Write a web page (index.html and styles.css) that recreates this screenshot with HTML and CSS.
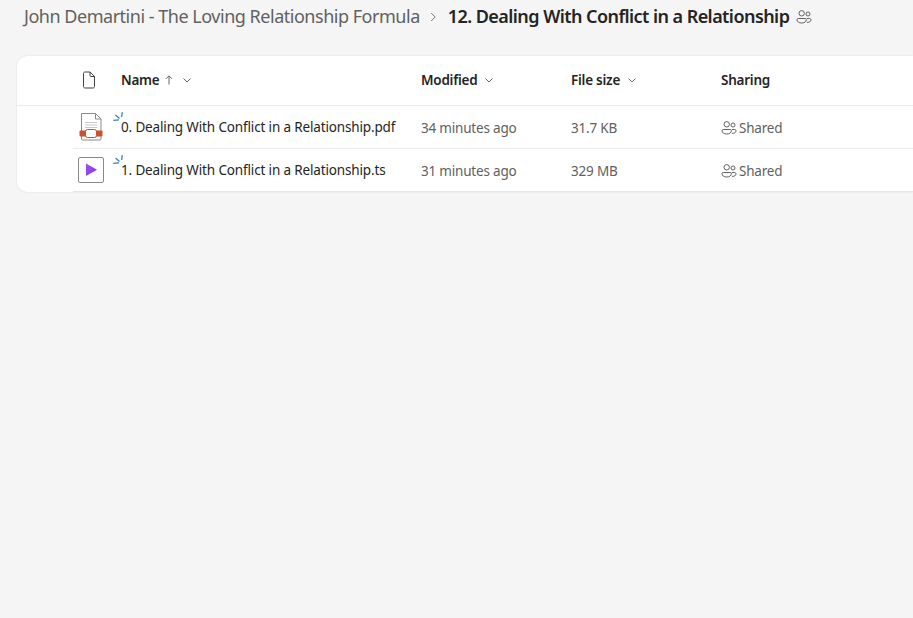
FILE: index.html
```html
<!DOCTYPE html>
<html lang="en">
<head>
<meta charset="utf-8">
<title>12. Dealing With Conflict in a Relationship</title>
<link rel="stylesheet" href="styles.css">
</head>
<body>
<nav class="crumbs">
  <span class="crumb-parent">John Demartini - The Loving Relationship Formula</span>
  <svg class="crumb-sep" width="12" height="12" viewBox="0 0 12 12"><path d="M4.200 2 8.200 6l-4 4" fill="none" stroke="#777" stroke-width="1"/></svg>
  <span class="crumb-current">12. Dealing With Conflict in a Relationship</span>
  <svg class="crumb-people" width="16" height="16" viewBox="0 0 16 16"><use href="#people"/></svg>
</nav>

<svg class="defs" width="0" height="0">
  <defs>
    <g id="people" fill="none" stroke="#616161" stroke-width="1">
      <circle cx="5.700" cy="4.300" r="2.700"/>
      <circle cx="12" cy="5" r="2"/>
      <path d="M1 10.700c0-.7.500-1.200 1.200-1.200h7c.7 0 1.200.5 1.200 1.200 0 2-2 3.300-4.700 3.300S1 12.700 1 10.700Z"/>
      <path d="M10.900 9.500h2.700c.8 0 1.400.6 1.400 1.300 0 1.600-1.500 2.700-4 2.600"/>
    </g>
    <g id="sync" fill="none" stroke="#2f86b5" stroke-width="1.300">
      <path d="M9.300 .2 8.600 5"/>
      <path d="M2.500 3 6.500 6.500"/>
      <path d="M.3 8.300 6 7.800"/>
    </g>
  </defs>
</svg>

<main class="card">
  <div class="row head">
    <div class="cell-icon">
      <svg width="16" height="18" viewBox="0 0 16 18"><path d="M2.500 2.500C2.500 1.700 3.200 1 4 1h5l4.500 4.500v10c0 .8-.7 1.500-1.500 1.500H4c-.8 0-1.500-.7-1.500-1.500Z M9 1v3.500c0 .6.400 1 1 1h3.500" fill="none" stroke="#424242" stroke-width="1"/></svg>
    </div>
    <div class="col col-name">Name
      <svg class="arrow" width="12" height="12" viewBox="0 0 12 12"><path d="M6 10.500V2M3 4.800 6 1.800l3 3" fill="none" stroke="#666" stroke-width="1"/></svg>
      <svg class="chev chev-name" width="12" height="12" viewBox="0 0 12 12"><path d="M2.500 4.500 6 8l3.500-3.500" fill="none" stroke="#666" stroke-width="1"/></svg>
    </div>
    <div class="col">Modified
      <svg class="chev" width="12" height="12" viewBox="0 0 12 12"><path d="M2.500 4.500 6 8l3.500-3.500" fill="none" stroke="#666" stroke-width="1"/></svg>
    </div>
    <div class="col">File size
      <svg class="chev" width="12" height="12" viewBox="0 0 12 12"><path d="M2.500 4.500 6 8l3.500-3.500" fill="none" stroke="#666" stroke-width="1"/></svg>
    </div>
    <div class="col">Sharing</div>
  </div>

  <div class="row item">
    <div class="cell-icon">
      <svg width="26" height="30" viewBox="0 0 26 30">
        <path d="M3.500 1.500h14l5.500 5.500v20c0 .6-.4 1-1 1H4.500c-.6 0-1-.4-1-1Z" fill="#fff" stroke="#8a8a8a" stroke-width="1"/>
        <path d="M17.500 1.500V7H23" fill="none" stroke="#8a8a8a" stroke-width="1"/>
        <path d="M7 10.500h12M7 13h12M7 15.500h12" stroke="#c8c8c8" stroke-width="1"/>
        <rect x="1.500" y="18.500" width="23" height="6" rx="1" fill="#c8512f"/>
        <rect x="7.500" y="17.500" width="11" height="8" rx="2" fill="#fff" stroke="#c8512f" stroke-width="1"/>
      </svg>
    </div>
    <div class="cell-name">
      <svg class="sync" width="11" height="10" viewBox="0 0 11 10"><use href="#sync"/></svg>
      0. Dealing With Conflict in a Relationship.pdf
    </div>
    <div class="cell">34 minutes ago</div>
    <div class="cell">31.7 KB</div>
    <div class="cell cell-share"><svg width="16" height="16" viewBox="0 0 16 16"><use href="#people"/></svg>Shared</div>
  </div>

  <div class="row item">
    <div class="cell-icon">
      <svg width="26" height="26" viewBox="0 0 26 26">
        <defs><linearGradient id="play" x1="0" y1="0" x2="1" y2="1"><stop offset="0" stop-color="#a050f0"/><stop offset="1" stop-color="#7a3cf0"/></linearGradient></defs>
        <rect x=".5" y=".5" width="25" height="25" rx="1.500" fill="#fff" stroke="#8a8a8a" stroke-width="1"/>
        <path d="M8 6.500v12.500l11-6.200Z" fill="url(#play)"/>
      </svg>
    </div>
    <div class="cell-name">
      <svg class="sync" width="11" height="10" viewBox="0 0 11 10"><use href="#sync"/></svg>
      1. Dealing With Conflict in a Relationship.ts
    </div>
    <div class="cell">31 minutes ago</div>
    <div class="cell">329 MB</div>
    <div class="cell cell-share"><svg width="16" height="16" viewBox="0 0 16 16"><use href="#people"/></svg>Shared</div>
  </div>
</main>
</body>
</html>
```
FILE: styles.css
```css
* { box-sizing: border-box; }
html, body { height: 100%; }
body {
  margin: 0;
  background: #f5f5f5;
  font-family: "Noto Sans", "Open Sans", sans-serif;
  color: #242424;
  overflow: hidden;
  padding: 5px 0 0 17px;
}
.defs { position: absolute; }
.crumbs {
  display: flex;
  align-items: center;
  height: 24px;
  padding-left: 7px;
  font-size: 18px;
  white-space: nowrap;
}
.crumb-parent { color: #616161; letter-spacing: -.48px; position: relative; top: -1px; }
.crumb-sep { margin: 0 9px 0 7px; flex: none; }
.crumb-current { font-weight: 600; letter-spacing: -.56px; position: relative; top: -1px; }
.crumb-people { margin-left: 7px; flex: none; }
.card {
  margin-top: 27px;
  height: 136px;
  background: #fff;
  border-radius: 10px 0 0 10px;
  box-shadow: 0 0 2px rgba(0, 0, 0, .12);
}
.row {
  display: grid;
  grid-template-columns: 48px 300px 150px 150px 1fr;
  align-items: center;
  font-size: 14px;
  white-space: nowrap;
}
.head {
  height: 50px;
  padding-left: 56px;
  padding-bottom: 2px;
  border-bottom: 1px solid #ebebeb;
}
.item {
  height: 43px;
  margin-left: 56px;
  border-bottom: 1px solid #ebebeb;
}
.item:last-child { border-bottom-color: #e6e6e6; }
.cell-icon { display: flex; align-items: center; padding-left: 5px; }
.head .cell-icon { padding-left: 8px; }
.col { font-weight: 600; display: flex; align-items: center; font-size: 13.500px; letter-spacing: -.24px; }
.arrow { margin-left: 3px; }
.chev { margin-left: 6px; }
.chev-name { margin-left: 6px; }
.cell-name { position: relative; font-size: 13.500px; letter-spacing: -.15px; }
.sync { position: absolute; left: -8px; top: -6px; }
.cell { color: #616161; font-size: 13.500px; letter-spacing: -.2px; padding-top: 2px; }
.cell-share { display: flex; align-items: center; gap: 2px; }
```
